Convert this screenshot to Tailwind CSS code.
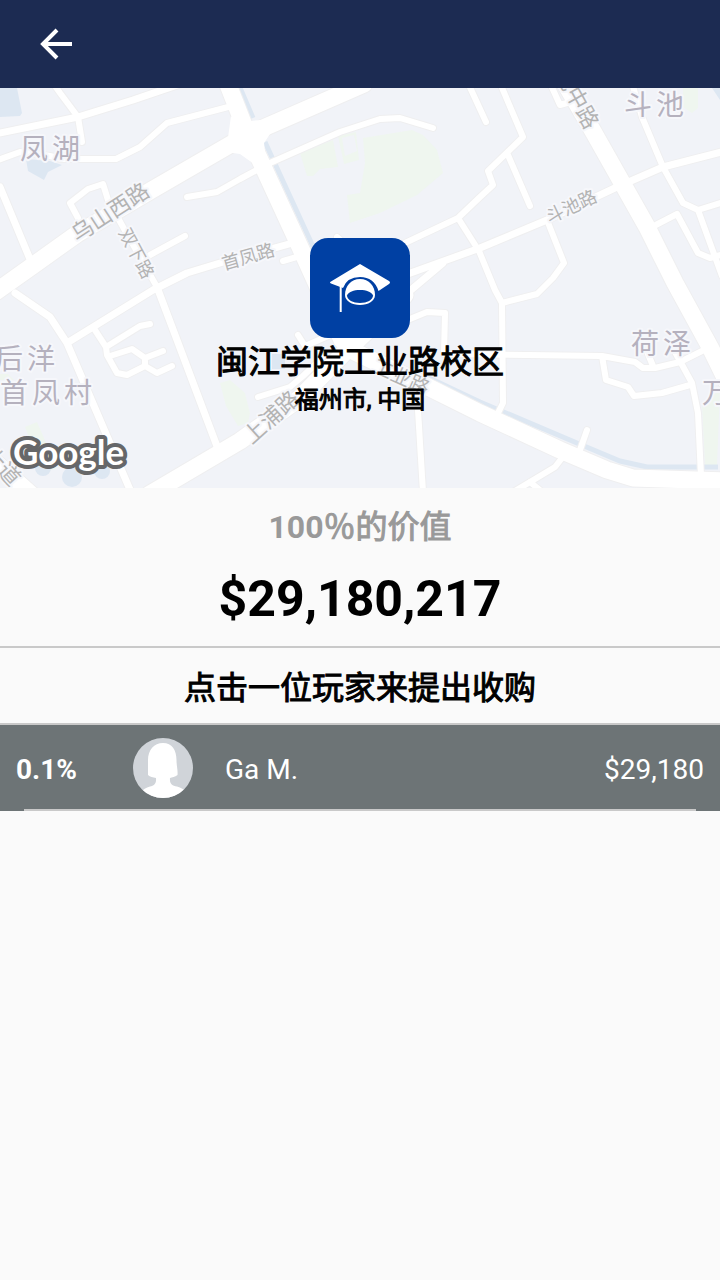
<!DOCTYPE html>
<html lang="zh-CN">
<head>
<meta charset="utf-8">
<meta name="viewport" content="width=device-width, initial-scale=1">
<title>闽江学院工业路校区</title>
<script src="https://cdn.jsdelivr.net/npm/@tailwindcss/browser@4"></script>
</head>
<body class="min-h-screen bg-[#fafafa] text-black font-[Roboto,'Noto_Sans_CJK_SC',sans-serif]">
<header class="flex h-[88px] items-center bg-[#1c2b52] px-8">
  <button type="button" aria-label="返回" class="flex size-12 items-center justify-center">
    <svg class="size-12" viewBox="0 0 48 48" fill="none" stroke="#fff" stroke-width="4" aria-hidden="true">
      <path d="M40 24H12" /><path d="M25 10L11 24L25 38" />
    </svg>
  </button>
</header>
<main>
  <section class="relative h-[400px] overflow-hidden bg-[#f1f3f8]">
    <svg class="block h-full w-full" viewBox="0 0 720 400" preserveAspectRatio="xMidYMid slice" role="img" aria-label="地图">
      <defs>
        <g id="lanes">
          <path d="M53 -5L60 5L78 29L82 54M-5 73L20 64L50 68L62 71H116L140 59L167 35L232 18"/>
          <path d="M78 130L70 115L88 101L103 96L108 112L123 139L157 199M187 109L217 104L240 91L270 75L340 44L380 31L400 30L433 40M185 148L150 167M283 173L300 168M337 149L347 158"/>
          <path d="M93 239L106 259L107 267L117 285L127 287L145 278L157 285L172 278M106 259L140 238L150 236M110 268L132 261L145 270V278M145 270L163 263"/>
          <path d="M405 155L458 130L480 109L493 97L488 83L523 49L500 -5M458 130L479 163L495 202L502 215L503 315L496 329M508 67L530 118M468 -5L486 34M550 -5L560 17L574 13"/>
          <path d="M632 -5L642 29L663 79L683 115L698 122L724 114M698 122L722 188M650 140L677 126L698 165L710 170L724 166M547 132L564 175L553 190L537 206L502 215"/>
          <path d="M405 233L427 224L445 225L444 266L602 268L635 274L643 280H655L680 274L704 262M602 268L606 292L628 299L634 308L662 305L690 297M675 264L692 295L698 325L701 388M648 266L653 278M587 342L580 362M562 370L555 379L515 403M530 394L541 403"/>
          <path d="M418 322L423 404M258 309L290 299L303 288L322 270M298 247L305 258L335 245"/>
        </g>
        <g id="streets">
          <path d="M-5 46L78 29L133 12L180 -4M0 99L32 176M15 205L50 229L67 255L131 404M67 255L93 239L153 202L187 185L220 175L300 153M157 199L177 252L218 361"/>
          <path d="M405 187L480 160L547 132L617 99L663 79L725 63M405 207L443 175"/>
        </g>
        <g id="avenues">
          <path d="M-10 208L35 176L77 146L150 103L245 48L364 -4M227 -6L247 45L260 72L300 159L342 252L355 264L418 294L480 325L560 362L607 382L633 390L725 393"/>
          <path d="M150 406L240 353L300 310L345 264L405 207M562 -10L594 45L647 139L675 195L710 259L735 310M-12 368L35 410"/>
        </g>
      </defs>
      <rect width="720" height="400" fill="#f1f3f8"/>
      <g fill="#eff6ef">
        <path d="M363 50L412 42L423 47L437 62L443 85L417 107L380 125L350 135L347 107L360 105L365 75Z"/>
        <path d="M300 65L333 52L338 79L320 81L313 88H307Z"/>
        <path fill-rule="evenodd" d="M338 48L356 44L359 72L344 76ZM342 50L345 68L357 63L354 47Z"/>
        <path d="M683 0H698V20L692 25L683 19ZM220 295L230 292L245 305L250 325L248 335L238 338L226 318ZM25 339L37 334L57 380L43 385ZM702 315L720 302L717 377H705ZM0 286H8L14 292H0Z"/>
      </g>
      <g fill="#dde7f2">
        <path d="M0 0H17L22 25L20 28L0 29ZM26 71L50 73L62 77L48 84L44 92L28 83ZM272 266H285V281H272ZM712 0H720V12Z"/>
        <circle cx="72" cy="389" r="10"/><circle cx="43" cy="380" r="8"/><circle cx="102" cy="383" r="8"/>
      </g>
      <path d="M238 -5L253 30M265 54L316 165M425 288L480 314L577 355L620 373L647 379H718" fill="none" stroke="#dde7f2" stroke-width="5"/>
      <g fill="none" stroke-linecap="round" stroke-linejoin="round">
        <g stroke="#efeff0"><use href="#lanes" stroke-width="8"/><use href="#streets" stroke-width="9"/><use href="#avenues" stroke-width="19"/></g>
        <g stroke="#fff"><use href="#lanes" stroke-width="6"/><use href="#streets" stroke-width="7"/><use href="#avenues" stroke-width="17"/></g>
      </g>
      <path d="M231 28L236 34L262 32L270 46L264 55L266 72L254 76L240 66L226 64Z" fill="#fff"/>
      <g class="font-['Noto_Sans_CJK_SC',sans-serif]" stroke="#f6f7fb" stroke-width="4" stroke-linejoin="round" paint-order="stroke">
        <g font-size="28" fill="#b5b1be">
          <text x="20 52" y="71">凤湖</text>
          <text x="624 656" y="27">斗池</text>
          <text x="631 663" y="266">荷泽</text>
          <text x="-5 27" y="281">后洋</text>
          <text x="0 32 64" y="315">首凤村</text>
          <text x="702" y="315">万</text>
        </g>
        <g fill="#b3b3b3" text-anchor="middle">
          <text font-size="22" transform="translate(110 124) rotate(-33)" y="8">乌山西路</text>
          <text font-size="18" transform="translate(137 165) rotate(62)" y="7">双下路</text>
          <text font-size="18" transform="translate(248 168) rotate(-16)" y="7">首凤路</text>
          <text font-size="18" transform="translate(571 118) rotate(-25)" y="7">斗池路</text>
          <text font-size="22" transform="translate(577 10) rotate(61)" y="8">池中路</text>
          <text font-size="22" transform="translate(271 329) rotate(-42)" y="8">上浦路</text>
          <text font-size="20" transform="translate(401 289) rotate(24)" y="7">工业路</text>
          <text font-size="22" transform="translate(2 378) rotate(48)" y="8">大道</text>
        </g>
      </g>
      <text x="13" y="377" class="font-[Lato,sans-serif]" font-size="35" font-weight="700" fill="#fff" stroke="#666769" stroke-width="8" stroke-linejoin="round" paint-order="stroke">Google</text>
    </svg>
    <div class="absolute inset-x-0 top-[150px] flex flex-col items-center">
      <svg class="size-[100px] rounded-[18px] bg-[#0040a3]" viewBox="0 0 100 100" aria-hidden="true">
        <path d="M50 26L79 43Q81 44.500 79 46L68.500 53Q64 39 50 39Q37 39 33 50L21 45.500Q19 44.500 21 43.500Z" fill="#fff"/>
        <path d="M30.700 48V74" stroke="#fff" stroke-width="2"/>
        <path d="M50 41C59 41 65 48 65 57C65 63 58 67 50 67S35 63 35 57C35 48 41 41 50 41Z" fill="#fff"/>
        <path d="M37 57.500C38 54 44 52 50 52S62 54 63 57.500C63 62 57 65 50 65S37 62 37 57.500Z" fill="#0040a3"/>
      </svg>
      <h1 class="mt-1 text-[32px] leading-10 font-normal [-webkit-text-stroke:1px_#000]">闽江学院工业路校区</h1>
      <p class="text-2xl leading-9 [-webkit-text-stroke:1px_#000]">福州市, 中国</p>
    </div>
  </section>
  <section class="flex h-40 flex-col items-center border-b-2 border-[#c9c9c9] pt-4 text-center">
    <h2 class="text-[32px] leading-[46px] text-[#999]"><span class="font-bold">100</span><span class="[-webkit-text-stroke:1px_#999]">％的价值</span></h2>
    <p class="mt-4 text-[50px] leading-[66px] font-bold">$29,180,217</p>
  </section>
  <section>
    <h2 class="flex h-[77px] items-center justify-center border-b-2 border-[#c9c9c9] pt-1 text-[32px] leading-10 [-webkit-text-stroke:1px_#000]">点击一位玩家来提出收购</h2>
    <ul>
      <li class="bg-[#6d7476] text-white">
        <button type="button" class="flex h-[84px] w-full items-center px-4 pt-0.5 text-left text-[28px] leading-9">
          <span class="w-[117px] pt-1 font-bold">0.1%</span>
          <svg class="size-[60px] rounded-full bg-[#d0d4d9]" viewBox="0 0 60 60" aria-hidden="true">
            <path d="M30 5C39 5 43.500 12 43.500 22C43.500 28 45 32 44.500 37C42 39 39 39 37 40C36.500 46 39 47.500 44 48.500Q50 50 53 54V60H8V54Q11 50 17 48.500C21 47.500 23.500 46 23 40C20 39 17 39 15 37C15 32 15 28 15 22C15 12 21 5 30 5Z" fill="#fff"/>
          </svg>
          <span class="ml-8 flex-1 pt-1">Ga M.</span>
          <span class="pt-1">$29,180</span>
        </button>
        <div class="mx-6 h-0.5 bg-[#c9c9c9]"></div>
      </li>
    </ul>
  </section>
</main>
</body>
</html>
